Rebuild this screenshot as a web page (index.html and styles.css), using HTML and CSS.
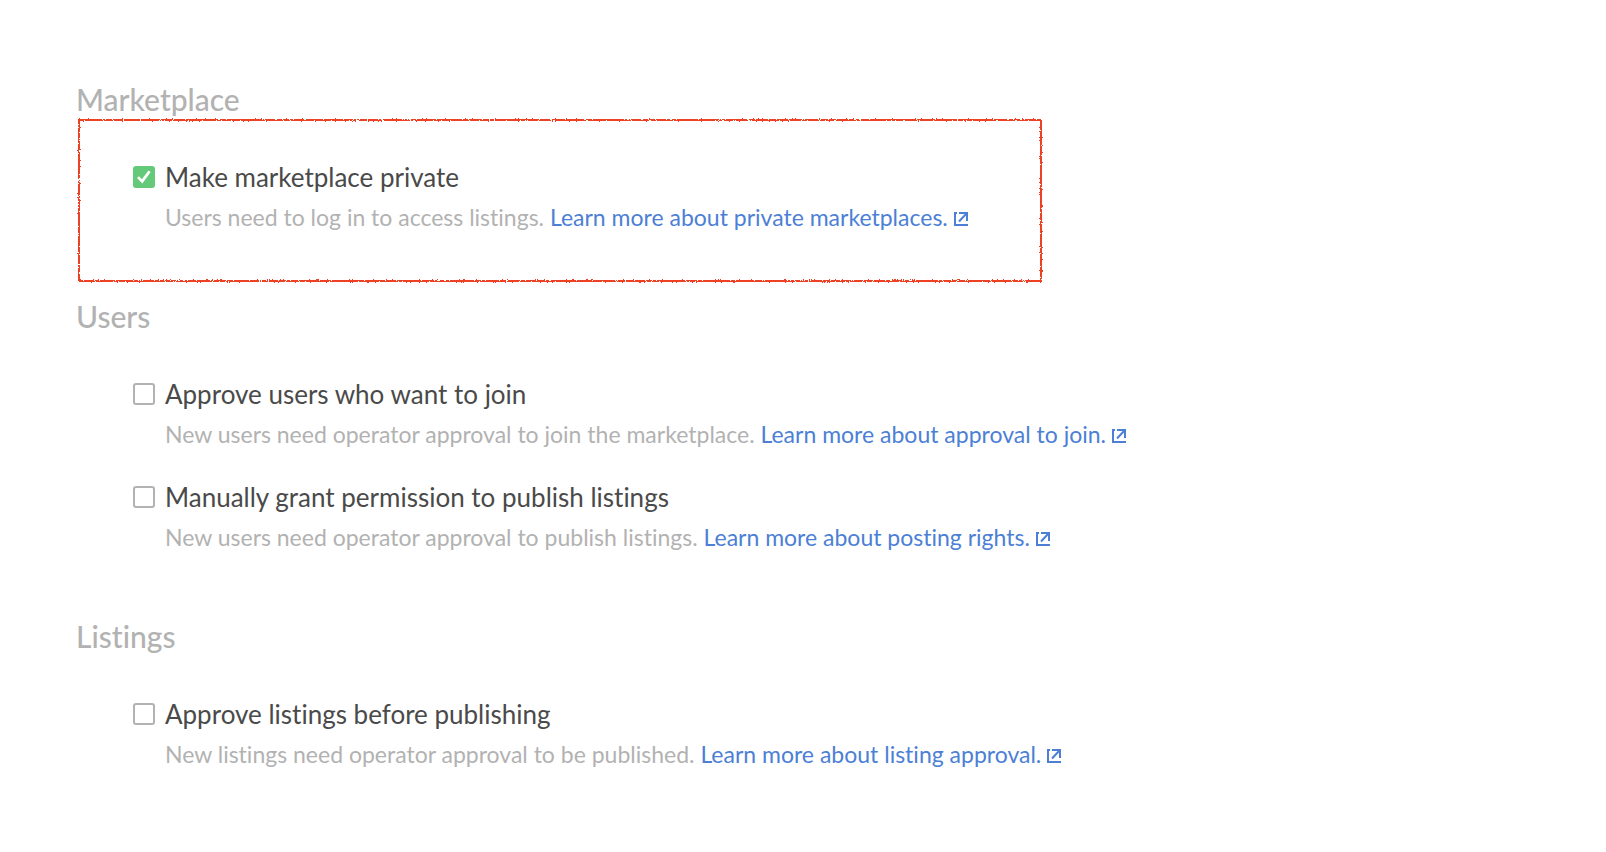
FILE: index.html
```html
<!DOCTYPE html>
<html lang="en">
<head>
<meta charset="utf-8">
<meta name="viewport" content="width=device-width, initial-scale=1">
<title>Access control</title>
<link rel="stylesheet" href="styles.css">
</head>
<body>
<svg class="defs" width="0" height="0" aria-hidden="true">
  <filter id="rough" x="-1%" y="-3%" width="102%" height="106%">
    <feTurbulence type="fractalNoise" baseFrequency="0.7" numOctaves="2" seed="4" result="noise"/>
    <feDisplacementMap in="SourceGraphic" in2="noise" scale="3" xChannelSelector="R" yChannelSelector="G"/>
  </filter>
  <symbol id="external" viewBox="0 0 14 14">
    <path d="M3 1H1V13H14" fill="none" stroke="currentColor" stroke-width="2"/>
    <path d="M5 1H13V9M12.500 1.500L5 9.500" fill="none" stroke="currentColor" stroke-width="2"/>
  </symbol>
</svg>
<main class="settings">
  <section class="section">
    <h2 class="heading">Marketplace</h2>
    <div class="options highlight">
      <div class="option">
        <input class="check" type="checkbox" id="private" checked>
        <label class="label" for="private">Make marketplace private</label>
        <p class="description">Users need to log in to access listings. <a class="link" href="#">Learn more about private marketplaces. <svg class="icon" aria-hidden="true"><use href="#external"/></svg></a></p>
      </div>
    </div>
  </section>
  <section class="section">
    <h2 class="heading">Users</h2>
    <div class="options">
      <div class="option">
        <input class="check" type="checkbox" id="join">
        <label class="label" for="join">Approve users who want to join</label>
        <p class="description">New users need operator approval to join the marketplace. <a class="link" href="#">Learn more about approval to join. <svg class="icon" aria-hidden="true"><use href="#external"/></svg></a></p>
      </div>
      <div class="option">
        <input class="check" type="checkbox" id="publish">
        <label class="label" for="publish">Manually grant permission to publish listings</label>
        <p class="description">New users need operator approval to publish listings. <a class="link" href="#">Learn more about posting rights. <svg class="icon" aria-hidden="true"><use href="#external"/></svg></a></p>
      </div>
    </div>
  </section>
  <section class="section">
    <h2 class="heading">Listings</h2>
    <div class="options">
      <div class="option">
        <input class="check" type="checkbox" id="listings">
        <label class="label" for="listings">Approve listings before publishing</label>
        <p class="description">New listings need operator approval to be published. <a class="link" href="#">Learn more about listing approval. <svg class="icon" aria-hidden="true"><use href="#external"/></svg></a></p>
      </div>
    </div>
  </section>
</main>
</body>
</html>
```
FILE: styles.css
```css
* { box-sizing: border-box; }

body {
  margin: 0;
  background: #fff;
  color: #4a4a4a;
  font-family: Lato, "Liberation Sans", sans-serif;
  font-variant-ligatures: none;
}

.defs { position: absolute; }

.settings {
  display: flex;
  flex-direction: column;
  gap: 18px;
  padding: 83px 76px 40px;
}

.heading {
  margin: 0 0 4px;
  color: #b2b2b2;
  font-size: 30px;
  font-weight: 500;
  line-height: 32px;
}

.options {
  display: flex;
  flex-direction: column;
  gap: 33px;
  width: fit-content;
  margin-left: 2px;
  padding: 42px 74px 51px 55px;
}

.highlight { position: relative; }

.highlight::after {
  content: "";
  position: absolute;
  inset: 0;
  border: 2px solid #ee4023;
  filter: url(#rough);
  pointer-events: none;
}

.option {
  display: grid;
  grid-template-columns: 22px auto;
  column-gap: 10px;
  row-gap: 10px;
  align-items: center;
}

.check {
  display: grid;
  place-items: center;
  appearance: none;
  width: 22px;
  height: 22px;
  margin: 0;
  border: 2px solid #b2b2b2;
  border-radius: 3px;
  background: #fff;
}

.check:checked {
  border-color: #64c978;
  background: #64c978;
}

.check:checked::before {
  content: "";
  width: 14px;
  height: 14px;
  background: #fff;
  clip-path: polygon(0 57%, 14% 45%, 35% 66%, 82% 4%, 98% 15%, 38% 96%);
}

.label {
  justify-self: start;
  font-size: 26px;
  line-height: 32px;
}

.description {
  grid-column: 2;
  margin: 0;
  color: #b2b2b2;
  font-size: 23px;
  line-height: 28px;
}

.link {
  color: #4c7fd5;
  text-decoration: none;
}

.icon {
  width: 14px;
  height: 14px;
}
```
